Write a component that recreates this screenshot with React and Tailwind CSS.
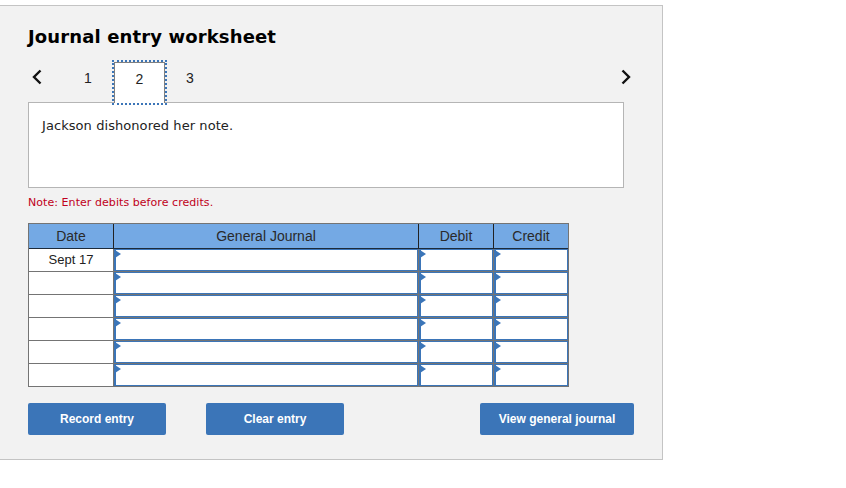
import React from 'react';

const rows = ['Sept 17', '', '', '', '', ''];

const EntryCell = ({ width }) => (
  <div className={`relative bg-white border-l-2 border-r border-y border-[#3b75b8] ${width}`}>
    <span className="absolute -left-[1px] top-0 w-0 h-0 border-y-[4px] border-y-transparent border-l-[6px] border-l-[#3b75b8]" />
  </div>
);

const HeaderCell = ({ children, width }) => (
  <div className={`flex h-[24px] items-center justify-center border-r border-[#222] text-[#2a2a2a] ${width}`}>{children}</div>
);

const App = () => {
  return (
    <div className="h-[488px] w-[846px] bg-white pt-[5px] font-['Liberation_Sans',sans-serif]">
      <div className="h-[455px] w-[663px] border-y border-r border-[#c4c4c4] bg-[#f2f2f2] pl-[28px] pt-[17px]">
        <h2 className="h-[28px] font-['DejaVu_Sans',sans-serif] text-[18px] font-bold leading-[28px] tracking-[0.13px] text-black">Journal entry worksheet</h2>

        <div className="relative z-10 mt-[11px] flex h-[41px] w-[606px] items-center text-sm text-[#222]">
          <svg width="10" height="16" viewBox="0 0 10 16" className="mb-[11px] ml-[4px] mr-[20px]" fill="none" stroke="#111" strokeWidth="2.4">
            <path d="M8.5 1.5 2 8l6.5 6.5" />
          </svg>
          <div className="flex h-full w-[52px] items-center justify-center pb-[9px]">1</div>
          <div className="flex h-full w-[51px] items-center justify-center border-x border-t border-[#808080] bg-white pb-[9px] outline-2 outline-dotted outline-[#3b75b8]">2</div>
          <div className="flex h-full w-[50px] items-center justify-center pb-[9px]">3</div>
          <svg width="10" height="16" viewBox="0 0 10 16" className="mb-[11px] ml-auto mr-[3px]" fill="none" stroke="#111" strokeWidth="2.4">
            <path d="M1.5 1.5 8 8l-6.5 6.5" />
          </svg>
        </div>

        <div className="-mt-[1px] h-[86px] w-[596px] border border-[#b5b5b5] bg-white px-[13px] py-[14px] font-['DejaVu_Sans',sans-serif] text-[13px] leading-[18px] tracking-[0.07px] text-[#222]">
          Jackson dishonored her note.
        </div>

        <p className="mt-[6px] h-[16px] pt-[1px] font-['DejaVu_Sans',sans-serif] text-[11px] leading-[16px] tracking-[0.06px] text-[#c00020]">Note: Enter debits before credits.</p>

        <div className="mt-[13px] w-[541px] border border-[#747474] text-sm">
          <div className="flex border-b border-[#1d2b3a] bg-[#74a9e4]">
            <HeaderCell width="w-[85px]">Date</HeaderCell>
            <HeaderCell width="w-[305px]">General Journal</HeaderCell>
            <HeaderCell width="w-[75px]">Debit</HeaderCell>
            <div className="flex h-[24px] w-[74px] items-center justify-center text-[#2a2a2a]">Credit</div>
          </div>
          {rows.map((date, i) => (
            <div key={i} className={`flex ${i < 5 ? 'h-[23px] border-b border-[#747474]' : 'h-[22px]'}`}>
              <div className="flex w-[84px] items-center justify-center bg-white pt-[1px] text-[13px] text-[#222]">{date}</div>
              <div className="w-[1px] bg-[#747474]" />
              <EntryCell width="w-[304px]" />
              <div className="w-[1px] bg-[#747474]" />
              <EntryCell width="w-[74px]" />
              <div className="w-[1px] bg-[#747474]" />
              <EntryCell width="w-[74px]" />
            </div>
          ))}
        </div>

        <div className="mt-[16px] flex w-[606px] gap-[40px] text-xs font-bold text-white">
          <button className="h-[32px] w-[138px] rounded-[2px] bg-[#3b75b8]">Record entry</button>
          <button className="h-[32px] w-[138px] rounded-[2px] bg-[#3b75b8]">Clear entry</button>
          <button className="ml-auto h-[32px] w-[154px] rounded-[2px] bg-[#3b75b8]">View general journal</button>
        </div>
      </div>
    </div>
  );
};

export default App;
